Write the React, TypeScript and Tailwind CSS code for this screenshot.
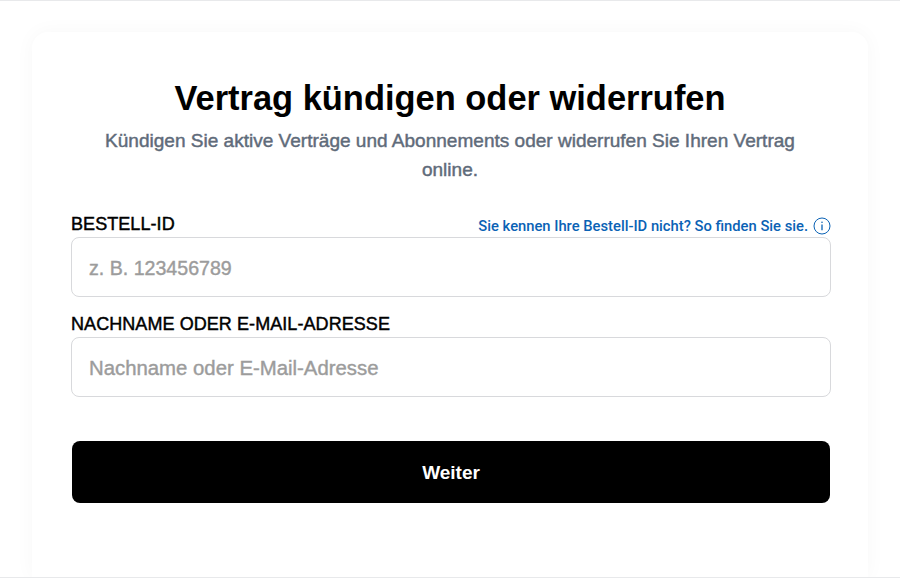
import React from 'react';

const App: React.FC = () => {
  return (
    <div className="h-[578px] overflow-hidden bg-white border-y border-[#e8e9eb] font-['Liberation_Sans',Arial,sans-serif] flex flex-col">
      <main className="flex-1 mt-[31px] mx-8 bg-white rounded-t-[16px] shadow-[0_0_20px_rgba(0,0,0,0.035)] px-[38px] pt-[44px]">
        <h1 className="text-[34.45px] leading-[44px] font-bold text-black text-center">Vertrag kündigen oder widerrufen</h1>
        <p className="mt-[6px] mx-auto max-w-[700px] text-[19.05px] leading-[29px] text-[#5f6b7a] text-center [-webkit-text-stroke:0.45px_#5f6b7a]">
          Kündigen Sie aktive Verträge und Abonnements oder widerrufen Sie Ihren Vertrag online.
        </p>

        <form className="mt-[27px] ml-px -mr-px flex flex-col">
          <div className="flex items-end justify-between h-[26px]">
            <label htmlFor="order-id" className="text-[18px] tracking-[0.07px] leading-[26px] text-black [-webkit-text-stroke:0.45px_#000]">BESTELL-ID</label>
            <a href="#" className="mb-px flex items-center gap-[5px] font-['Roboto',sans-serif] font-medium text-[14.75px] leading-[20px] text-[#0a62b5]">
              Sie kennen Ihre Bestell-ID nicht? So finden Sie sie.
              <svg width="18" height="18" viewBox="0 0 18 18" fill="none" stroke="#0a62b5" strokeWidth="1">
                <circle cx="9" cy="9" r="8" />
                <path d="M9 7.6V13.2" strokeWidth="1.3" />
                <circle cx="9" cy="5.2" r="0.8" fill="#0a62b5" stroke="none" />
              </svg>
            </a>
          </div>
          <input
            id="order-id"
            placeholder="z. B. 123456789"
            className="h-[60px] w-full rounded-[8px] border-[1.5px] border-[#d8d9dc] bg-white px-[17px] pt-[2px] text-[19.6px] outline-none placeholder:text-[#9c9c9c] [-webkit-text-stroke:0.4px_#9c9c9c]"
          />

          <label htmlFor="name" className="mt-[14px] h-[26px] text-[18px] tracking-[0.07px] leading-[26px] text-black [-webkit-text-stroke:0.45px_#000]">NACHNAME ODER E-MAIL-ADRESSE</label>
          <input
            id="name"
            placeholder="Nachname oder E-Mail-Adresse"
            className="h-[60px] w-full rounded-[8px] border-[1.5px] border-[#d8d9dc] bg-white px-[17px] pt-[2px] text-[20.35px] outline-none placeholder:text-[#9c9c9c] [-webkit-text-stroke:0.4px_#9c9c9c]"
          />

          <button type="button" className="mt-[44px] mx-px h-[62px] rounded-[8px] bg-black pt-[3px] text-white text-[19px] font-bold">
            Weiter
          </button>
        </form>
      </main>
    </div>
  );
};

export default App;
